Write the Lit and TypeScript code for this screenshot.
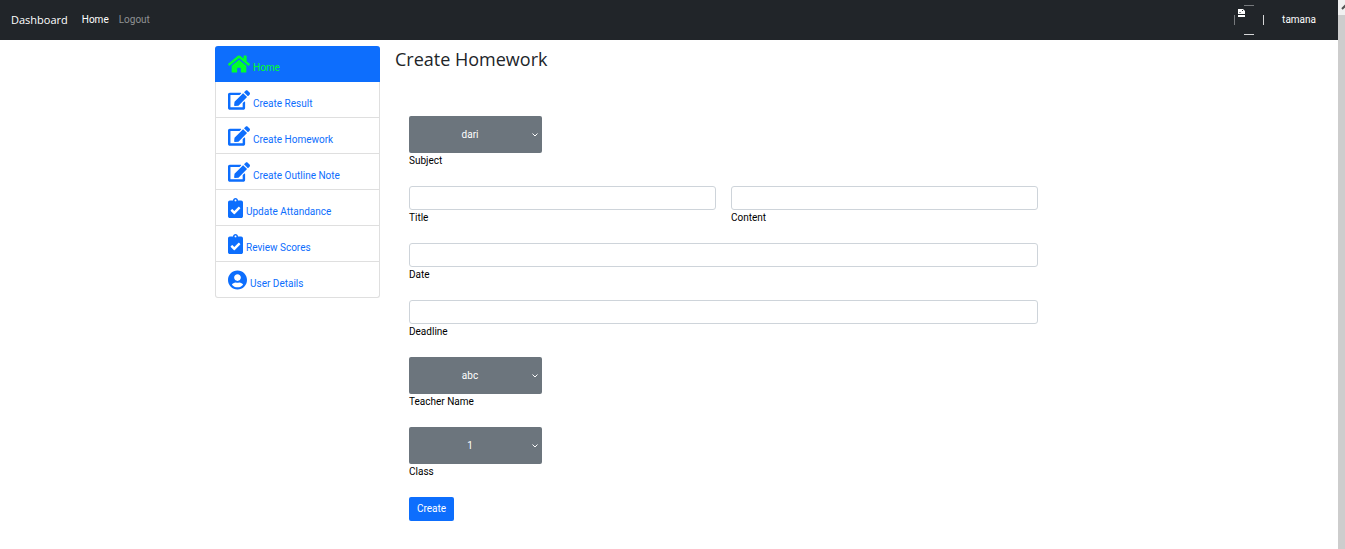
import { LitElement, html, css, svg } from "lit";
import { customElement } from "lit/decorators.js";

const ICONS = {
  home: {
    width: 22,
    box: "0 0 576 512",
    path: "M280.37 148.26L96 300.11V464a16 16 0 0 0 16 16l112.06-.29a16 16 0 0 0 15.92-16V368a16 16 0 0 1 16-16h64a16 16 0 0 1 16 16v95.64a16 16 0 0 0 16 16.05L464 480a16 16 0 0 0 16-16V300L295.67 148.26a12.19 12.19 0 0 0-15.3 0zM571.6 251.47L488 182.56V44.05a12 12 0 0 0-12-12h-56a12 12 0 0 0-12 12v72.61L318.47 43a48 48 0 0 0-61 0L4.34 251.47a12 12 0 0 0-1.6 16.9l25.5 31A12 12 0 0 0 45.15 301l235.22-193.74a12.19 12.19 0 0 1 15.3 0L530.9 301a12 12 0 0 0 16.9-1.6l25.5-31a12 12 0 0 0-1.7-16.93z",
  },
  edit: {
    width: 22,
    box: "0 0 576 512",
    path: "M402.6 83.2l90.2 90.2c3.8 3.8 3.8 10 0 13.8L274.4 405.6l-92.8 10.3c-12.4 1.4-22.9-9.1-21.5-21.5l10.3-92.8L388.8 83.2c3.8-3.8 10-3.8 13.8 0zm162-22.9l-48.8-48.8c-15.2-15.2-39.9-15.2-55.2 0l-35.4 35.4c-3.8 3.8-3.8 10 0 13.8l90.2 90.2c3.8 3.8 10 3.8 13.8 0l35.4-35.4c15.2-15.3 15.2-40 0-55.2zM384 346.2V448H64V128h229.8c3.2 0 6.2-1.3 8.5-3.5l40-40c7.6-7.6 2.2-20.5-8.5-20.5H48C21.5 64 0 85.5 0 112v352c0 26.5 21.5 48 48 48h352c26.5 0 48-21.5 48-48V306.2c0-10.7-12.9-16-20.5-8.5l-40 40c-2.200 2.300-3.500 5.300-3.500 8.500z",
  },
  clipboard: {
    width: 15,
    box: "0 0 384 512",
    path: "M336 64h-80c0-35.300-28.700-64-64-64s-64 28.700-64 64H48C21.500 64 0 85.500 0 112v352c0 26.500 21.500 48 48 48h288c26.500 0 48-21.500 48-48V112c0-26.500-21.500-48-48-48zM192 40c13.300 0 24 10.700 24 24s-10.700 24-24 24-24-10.700-24-24 10.700-24 24-24zm121.200 231.800l-143 141.800c-4.700 4.700-12.300 4.600-17-.1l-82.600-83.300c-4.700-4.700-4.600-12.300.1-17L99.100 285c4.700-4.700 12.300-4.600 17 .1l46 46.400 106-105.200c4.700-4.700 12.300-4.600 17 .1l28.200 28.400c4.700 4.800 4.600 12.300-.1 17z",
  },
  user: {
    width: 19,
    box: "0 0 496 512",
    path: "M248 8C111 8 0 119 0 256s111 248 248 248 248-111 248-248S385 8 248 8zm0 96c48.600 0 88 39.400 88 88s-39.400 88-88 88-88-39.400-88-88 39.400-88 88-88zm0 344c-58.700 0-111.300-26.600-146.500-68.200 18.800-35.400 55.600-59.800 98.500-59.800 2.400 0 4.800.4 7.100 1.100 13 4.200 26.600 6.900 40.900 6.900 14.300 0 28-2.700 40.900-6.900 2.300-.7 4.700-1.100 7.100-1.100 42.900 0 79.700 24.400 98.500 59.800C359.300 421.400 306.700 448 248 448z",
  },
};

type IconName = keyof typeof ICONS;

const MENU: { icon: IconName; text: string; active?: boolean }[] = [
  { icon: "home", text: "Home", active: true },
  { icon: "edit", text: "Create Result" },
  { icon: "edit", text: "Create Homework" },
  { icon: "edit", text: "Create Outline Note" },
  { icon: "clipboard", text: "Update Attandance" },
  { icon: "clipboard", text: "Review Scores" },
  { icon: "user", text: "User Details" },
];

@customElement("app-root")
export class AppRoot extends LitElement {
  static styles = css`
    :host {
      display: flex;
      min-height: 100vh;
      background: #fff;
      color: #212529;
      font: 10px/16px Roboto, "Open Sans", sans-serif;
    }
    * {
      box-sizing: border-box;
    }
    a {
      text-decoration: none;
      color: inherit;
    }
    .page {
      flex: 1;
      min-width: 0;
    }
    .navbar {
      display: flex;
      align-items: center;
      height: 40px;
      padding: 0 22px 0 11px;
      background: #212529;
      color: #fff;
    }
    .brand {
      font-family: "Open Sans", sans-serif;
      font-size: 11px;
      margin-right: 14px;
    }
    .links {
      display: flex;
      flex: 1;
      gap: 10px;
    }
    .muted {
      color: #909294;
    }
    .avatar {
      width: 30px;
      height: 30px;
      margin-right: 18px;
    }
    .container {
      display: grid;
      grid-template-columns: 165px minmax(0, 1fr);
      gap: 15px;
      max-width: 908px;
      margin: 0 auto;
      padding-top: 6px;
      align-items: start;
    }
    .menu {
      border: 1px solid #dfdfdf;
      border-top: 0;
      border-radius: 3px;
      color: #0d6efd;
    }
    .item {
      display: flex;
      align-items: center;
      gap: 3px;
      height: 36px;
      padding-left: 12px;
      border-bottom: 1px solid #dfdfdf;
    }
    .item:last-child {
      height: 35px;
      border-bottom: 0;
    }
    .item.active {
      margin: 0 -1px;
      padding-left: 13px;
      border-radius: 3px 3px 0 0;
      background: #0d6efd;
      border-color: #0d6efd;
      color: #00ff2a;
    }
    .icon {
      height: 20px;
      fill: currentColor;
    }
    .item span {
      padding-top: 8px;
    }
    h1 {
      margin: 0;
      font-family: "Open Sans", sans-serif;
      font-size: 18px;
      line-height: 26px;
      font-weight: 400;
    }
    form {
      display: grid;
      grid-template-columns: 1fr 1fr;
      gap: 17px 15px;
      max-width: 657px;
      padding: 44px 14px 28px;
    }
    .field {
      display: grid;
      color: #000;
    }
    .wide {
      grid-column: 1 / -1;
    }
    .text {
      width: 100%;
      height: 24px;
      padding: 0 8px;
      border: 1px solid #ced4da;
      border-radius: 3px;
      background: #fff;
      font: inherit;
    }
    .picker {
      display: grid;
      width: 133px;
      align-items: center;
      justify-items: end;
    }
    select {
      grid-area: 1 / 1;
      appearance: none;
      width: 100%;
      height: 37px;
      padding: 0 11px 0 0;
      border: 0;
      border-radius: 2px;
      background: #6c757d;
      color: #fff;
      font: inherit;
      text-align: center;
      text-align-last: center;
    }
    .chevron {
      grid-area: 1 / 1;
      width: 6px;
      height: 4px;
      margin-right: 4px;
      fill: none;
      stroke: #fff;
      pointer-events: none;
    }
    button {
      justify-self: start;
      height: 24px;
      padding: 0 8px;
      border: 0;
      border-radius: 2px;
      background: #0d6efd;
      color: #fff;
      font: inherit;
    }
    .rail {
      width: 7px;
      background: #cdcdcd;
    }
    .cap {
      display: block;
      width: 7px;
      height: 15px;
      background: #f1f1f1;
    }
  `;

  private icon(name: IconName) {
    const { width, box, path } = ICONS[name];
    return html`<svg class="icon" width=${width} viewBox=${box} aria-hidden="true">${svg`<path d=${path} />`}</svg>`;
  }

  private picker(id: string, label: string, value: string) {
    return html`<div class="field wide">
      <div class="picker">
        <select id=${id}><option>${value}</option></select>
        <svg class="chevron" viewBox="0 0 6 4" aria-hidden="true"><path d="M.5 .5L3 3L5.500 .5" /></svg>
      </div>
      <label for=${id}>${label}</label>
    </div>`;
  }

  private text(id: string, label: string, wide = false) {
    return html`<div class="field ${wide ? "wide" : ""}">
      <input class="text" type="text" id=${id} />
      <label for=${id}>${label}</label>
    </div>`;
  }

  render() {
    return html`
      <div class="page">
        <header class="navbar">
          <a class="brand" href="#">Dashboard</a>
          <nav class="links">
            <a href="#">Home</a>
            <a class="muted" href="#">Logout</a>
          </nav>
          <svg class="avatar" viewBox="0 0 30 30" aria-hidden="true">
            <g fill="none" stroke-width="1">
              <path stroke="#777a7d" d="M10 .5H20M.5 10V20" />
              <path stroke="#d5d6d7" d="M10 29.500H20M29.500 10V20" />
            </g>
            <path fill="#fff" d="M4 4h5l2 2v3H4zM4 10h7v2H4z" />
            <path fill="#212529" d="M5 8l1-1 1 1zM8 5h1v1H8z" />
          </svg>
          <a href="#">tamana</a>
        </header>
        <div class="container">
          <nav class="menu">
            ${MENU.map(
              (m) => html`<a class="item ${m.active ? "active" : ""}" href="#">${this.icon(m.icon)}<span>${m.text}</span></a>`
            )}
          </nav>
          <main>
            <h1>Create Homework</h1>
            <form>
              ${this.picker("subject", "Subject", "dari")}
              ${this.text("title", "Title")}
              ${this.text("content", "Content")}
              ${this.text("date", "Date", true)}
              ${this.text("deadline", "Deadline", true)}
              ${this.picker("teacher", "Teacher Name", "abc")}
              ${this.picker("class", "Class", "1")}
              <button type="button">Create</button>
            </form>
          </main>
        </div>
      </div>
      <div class="rail">
        <svg class="cap" viewBox="0 0 7 15" aria-hidden="true">
          <path fill="none" stroke="#505050" stroke-width="2" d="M4 9L8 5" />
        </svg>
      </div>
    `;
  }
}
